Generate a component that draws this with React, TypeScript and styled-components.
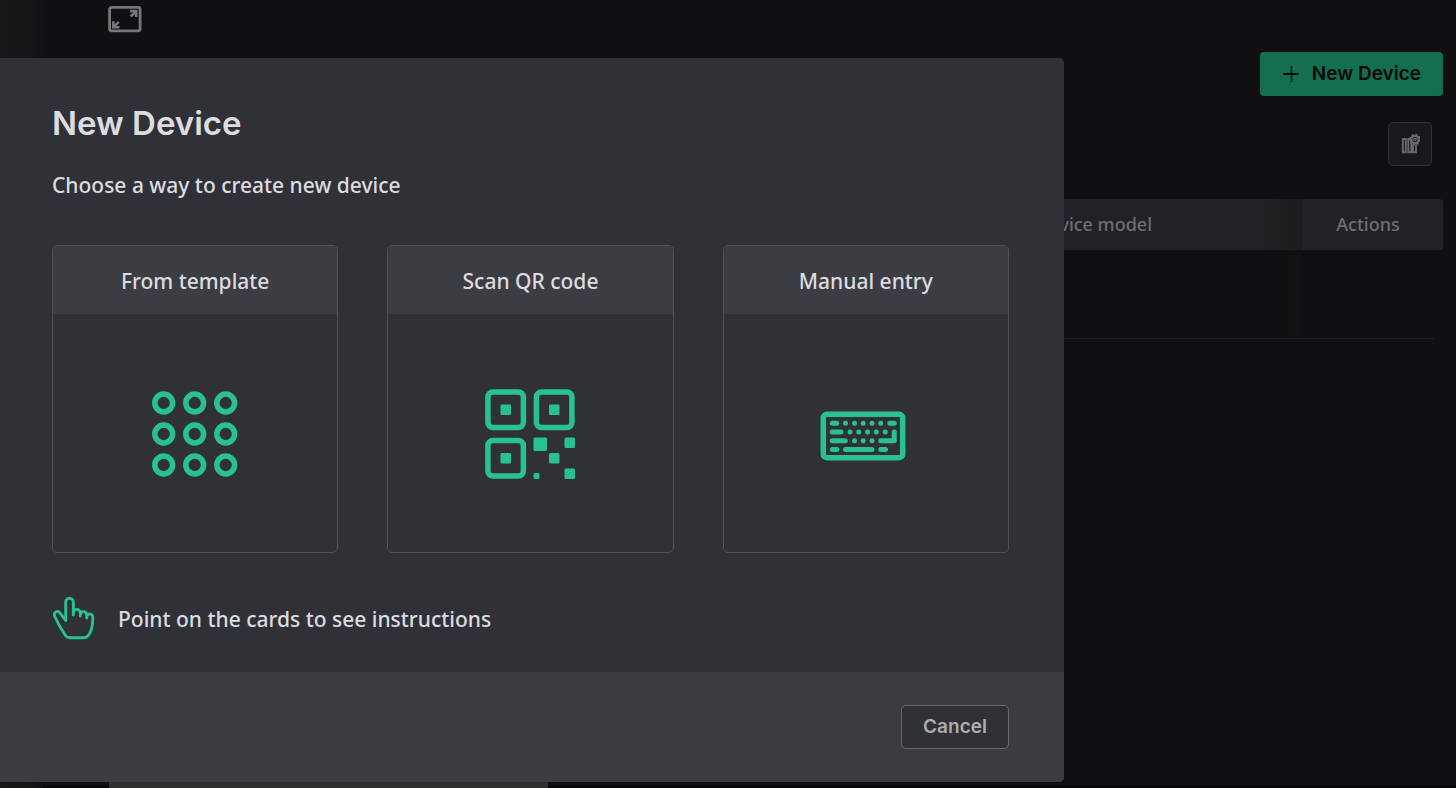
import React from "react";
import styled, { createGlobalStyle } from "styled-components";

const bodyFont = `"Noto Sans", sans-serif`;
const headingFont = `Inter, sans-serif`;
const green = "#27c28f";

const GlobalStyle = createGlobalStyle`
  *, *::before, *::after { box-sizing: border-box; }
  body {
    margin: 0;
    background: #0f0f14;
    color: #dcdce0;
    font-family: ${bodyFont};
    font-weight: 500;
  }
  button { font: inherit; color: inherit; cursor: pointer; margin: 0; }
`;

const Page = styled.div`
  min-height: 100vh;
  display: flex;
  overflow: hidden;
  position: relative;
`;

const SideShade = styled.div`
  flex: 0 0 43px;
  background: linear-gradient(to right, #161719 0%, #141516 70%, #111114 100%);
`;

const Main = styled.main`
  flex: 1;
  min-width: 0;
  display: flex;
  flex-direction: column;
`;

const Toolbar = styled.header`
  display: flex;
  height: 52px;
  padding: 4px 64px;
`;

const ExpandButton = styled.button`
  width: 36px;
  height: 30px;
  padding: 0;
  border: 0;
  background: none;
  color: #777678;
  svg { display: block; }
`;

const Actions = styled.div`
  display: flex;
  flex-direction: column;
  align-items: flex-end;
  gap: 26px;
  padding-right: 13px;
`;

const NewDeviceButton = styled.button`
  display: flex;
  align-items: center;
  gap: 12px;
  height: 44px;
  padding: 0 22px 2px;
  border: 0;
  border-radius: 4px;
  background: #146e50;
  color: #060809;
  font-family: ${headingFont};
  font-size: 19px;
  font-weight: 600;
  white-space: nowrap;
`;

const ColumnsButton = styled.button`
  display: flex;
  align-items: center;
  justify-content: center;
  width: 44px;
  height: 44px;
  margin-right: 11px;
  padding: 0;
  border: 1px solid #323236;
  border-radius: 5px;
  background: #19191d;
  color: #69696b;
`;

const DeviceTable = styled.table`
  width: calc(100% - 13px);
  margin-top: 33px;
  table-layout: fixed;
  border-collapse: separate;
  border-spacing: 0;
`;

const HeadCell = styled.th<{ $width?: number }>`
  width: ${(p) => (p.$width ? `${p.$width}px` : "auto")};
  height: 51px;
  padding: 0 0 2px;
  background: #222226;
  color: #6f6f72;
  font-size: 18px;
  font-weight: 500;
  &:last-child { border-top-right-radius: 4px; }
`;

const ModelHeadCell = styled(HeadCell)`
  padding-right: 150px;
  text-align: right;
  white-space: nowrap;
  background: linear-gradient(to right, #222226 calc(100% - 40px), #1c1c1e);
`;

const GripCell = styled(HeadCell)`
  background: linear-gradient(#222226, #222226) content-box, repeating-linear-gradient(#222226 0 5px, #2b2b2f 5px 7px);
`;

const BodyCell = styled.td<{ $shaded?: boolean; $plain?: boolean }>`
  height: 89px;
  padding: 0;
  border-bottom: ${(p) => (p.$plain ? "0" : "1px solid #1d1d21")};
  background: ${(p) =>
    p.$shaded ? "linear-gradient(to right, #0f0f14 calc(100% - 30px), #121213)" : "none"};
`;

const ScrollTrack = styled.div`
  margin-top: auto;
  height: 6px;
  padding-left: 66px;
  background: linear-gradient(#0f0f14 3px, #09070c 3px);
`;

const ScrollThumb = styled.div`
  width: 32.6%;
  height: 100%;
  background: #303033;
`;

const Dialog = styled.div`
  position: absolute;
  top: 58px;
  left: 0;
  width: calc(100% - 392px);
  overflow: hidden;
  border-radius: 0 5px 5px 0;
  background: #303136;
`;

const DialogBody = styled.div`
  padding: 43px 55px 32px 52px;
`;

const Title = styled.h1`
  margin: 0;
  color: #dddde1;
  font-family: ${headingFont};
  font-size: 33px;
  font-weight: 600;
  line-height: 44px;
`;

const Lead = styled.p`
  margin: 25px 0 44px;
  font-size: 21px;
  line-height: 31px;
`;

const Cards = styled.div`
  display: grid;
  grid-template-columns: repeat(3, 1fr);
  gap: 49px;
`;

const Card = styled.button`
  display: flex;
  flex-direction: column;
  height: 308px;
  padding: 0;
  overflow: hidden;
  border: 1px solid #505155;
  border-radius: 5px;
  background: none;
`;

const CardTitle = styled.span`
  width: 100%;
  background: #3c3d42;
  font-size: 21px;
  line-height: 32px;
  padding: 19px 0 17px;
`;

const CardArt = styled.span`
  flex: 1;
  width: 100%;
  display: flex;
  align-items: center;
  justify-content: center;
  padding-top: 2px;
  color: ${green};
`;

const Hint = styled.div`
  display: flex;
  align-items: center;
  gap: 22px;
  margin-top: 43px;
  font-size: 21px;
  line-height: 32px;
  svg { color: ${green}; }
`;

const HintText = styled.span`
  padding-top: 2px;
`;

const DialogFooter = styled.footer`
  display: flex;
  justify-content: flex-end;
  padding: 33px 55px 33px 52px;
  background: #3c3d42;
`;

const CancelButton = styled.button`
  width: 108px;
  height: 44px;
  padding: 0 0 2px;
  border: 1px solid #68696d;
  border-radius: 5px;
  background: #303136;
  color: #adadaf;
  font-family: ${headingFont};
  font-size: 19px;
  font-weight: 600;
`;

const ExpandIcon = () => (
  <svg width="36" height="30" viewBox="0 0 36 30" fill="none" stroke="currentColor">
    <rect x="2.600" y="3.400" width="30.500" height="23.400" rx="2" strokeWidth="2.800" />
    <path d="M23 7h6.200v6M28.500 7.700l-4.800 4.800M12.500 23.300H6.300v-6M7 22.600l4.800-4.800" strokeWidth="2.600" />
  </svg>
);

const PlusIcon = () => (
  <svg width="18" height="18" viewBox="0 0 18 18" stroke="currentColor" fill="none">
    <path d="M1.500 10h15" strokeWidth="2" />
    <path d="M9.500 2v16" strokeWidth="1.300" />
  </svg>
);

const ColumnsIcon = () => (
  <svg width="20" height="22" viewBox="0 0 20 22" fill="none" stroke="currentColor">
    <path d="M2.800 6h3v13.200h-3zM8.300 6h3v13.200h-3zM13 11.500v7.700h3v-7.700" strokeWidth="1.900" />
    <circle cx="15" cy="6.500" r="3.700" strokeWidth="2.300" fill="#19191d" />
    <circle cx="15" cy="6.500" r="5" strokeWidth="1.500" strokeDasharray="2.200 1.700" />
    <circle cx="15" cy="6.500" r="1.200" strokeWidth="1.200" />
  </svg>
);

const TemplateIcon = () => (
  <svg width="86" height="86" viewBox="0 0 86 86" fill="none" stroke="currentColor" strokeWidth="5.500">
    {[12, 43, 74].map((y) =>
      [12, 43, 74].map((x) => <circle key={`${x}-${y}`} cx={x - 0.300} cy={y} r="8.900" />)
    )}
  </svg>
);

const QrIcon = () => (
  <svg width="90" height="90" viewBox="0 0 90 90" fill="currentColor">
    <g fill="none" stroke="currentColor" strokeWidth="5.500">
      <rect x="2.900" y="2.900" width="35.500" height="35.500" rx="5" />
      <rect x="51.400" y="2.900" width="35.500" height="35.500" rx="5" />
      <rect x="2.900" y="51.400" width="35.500" height="35.500" rx="5" />
    </g>
    <rect x="15.500" y="15.500" width="10.500" height="10.500" rx="1" />
    <rect x="64" y="15.500" width="10.500" height="10.500" rx="1" />
    <rect x="15.500" y="64" width="10.500" height="10.500" rx="1" />
    <rect x="48.500" y="48.500" width="13.500" height="13.500" rx="1.500" />
    <rect x="79.500" y="48.500" width="10.500" height="10.500" rx="1.500" />
    <rect x="64" y="64" width="10.500" height="10.500" rx="1.500" />
    <rect x="48.500" y="84" width="6" height="6" rx="1.500" />
    <rect x="79.500" y="79.500" width="10.500" height="10.500" rx="1.500" />
  </svg>
);

const KeyboardIcon = () => (
  <svg width="92" height="54" viewBox="0 -4 92 54" fill="none" stroke="currentColor" strokeLinecap="round" strokeLinejoin="round">
    <rect x="3.300" y="3.300" width="79.400" height="43.400" rx="3.500" strokeWidth="5.500" />
    <path
      strokeWidth="5"
      d="M12.300 12.300h4.500M25.500 12.300h.01M34.500 12.300h.01M43.200 12.300h.01M52 12.300h.01M60.700 12.300h.01M69.800 12.300h4.500M12.300 21h8.700M30 21h.01M38.800 21h.01M47.600 21h.01M56.300 21h.01M65.200 21h.01M12.300 29.800h13M34.500 29.800h.01M43.200 29.800h.01M52 29.800h.01M60.800 29.800h13.500V21M12.300 38.500h4.500M25.500 38.500h26.500M60.800 38.500h4.800"
    />
  </svg>
);

const HandIcon = () => (
  <svg width="44" height="44" viewBox="0 0 44 44" fill="none" stroke="currentColor" strokeWidth="2.900" strokeLinecap="round" strokeLinejoin="round">
    <path d="M13.700 24.500V6a3.800 3.800 0 0 1 7.600 0V19M21.300 17.500c0-5.500 7-5.500 7 0v2.500M28.300 18.500c.5-4 6.500-4 6.500 1V22M34.800 20c1-3 6-2.500 6 1.500 0 8-.8 14.500-5 18.500-1.400 1.500-2.500 1.800-4.300 1.800H17.500c-2 0-3-.7-4-2.300C9 33 5.500 26.500 2.800 20.500c-1.800-4 3-6.600 5.400-3.300L13.700 24.500" />
  </svg>
);

const cards = [
  { title: "From template", Icon: TemplateIcon },
  { title: "Scan QR code", Icon: QrIcon },
  { title: "Manual entry", Icon: KeyboardIcon },
];

export default function App() {
  return (
    <>
      <GlobalStyle />
      <Page>
        <SideShade />
        <Main>
          <Toolbar>
            <ExpandButton aria-label="Full screen"><ExpandIcon /></ExpandButton>
          </Toolbar>
          <Actions>
            <NewDeviceButton><PlusIcon />New Device</NewDeviceButton>
            <ColumnsButton aria-label="Configure columns"><ColumnsIcon /></ColumnsButton>
          </Actions>
          <DeviceTable>
            <thead>
              <tr>
                <HeadCell />
                <ModelHeadCell $width={292}>Device model</ModelHeadCell>
                <HeadCell $width={132}>Actions</HeadCell>
                <GripCell $width={9} />
              </tr>
            </thead>
            <tbody>
              <tr>
                <BodyCell />
                <BodyCell $shaded />
                <BodyCell />
                <BodyCell $plain />
              </tr>
            </tbody>
          </DeviceTable>
          <ScrollTrack><ScrollThumb /></ScrollTrack>
        </Main>
        <Dialog role="dialog" aria-labelledby="dialog-title">
          <DialogBody>
            <Title id="dialog-title">New Device</Title>
            <Lead>Choose a way to create new device</Lead>
            <Cards>
              {cards.map(({ title, Icon }) => (
                <Card key={title}>
                  <CardTitle>{title}</CardTitle>
                  <CardArt><Icon /></CardArt>
                </Card>
              ))}
            </Cards>
            <Hint><HandIcon /><HintText>Point on the cards to see instructions</HintText></Hint>
          </DialogBody>
          <DialogFooter>
            <CancelButton>Cancel</CancelButton>
          </DialogFooter>
        </Dialog>
      </Page>
    </>
  );
}
